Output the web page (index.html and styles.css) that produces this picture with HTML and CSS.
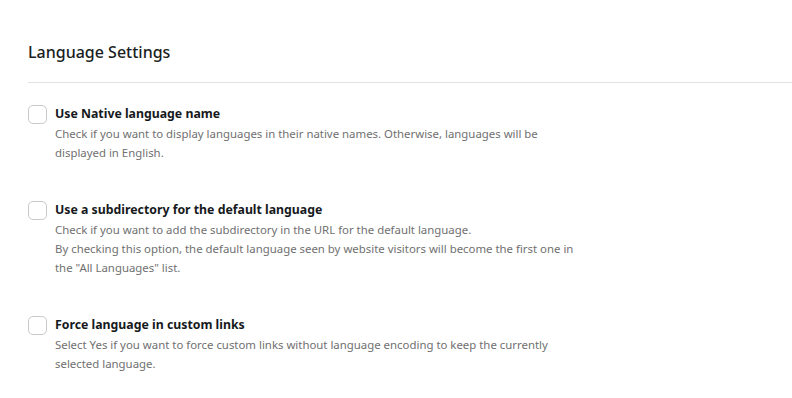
FILE: index.html
```html
<!DOCTYPE html>
<html lang="en">
<head>
    <meta charset="UTF-8">
    <meta name="viewport" content="width=device-width, initial-scale=1.0">
    <title>Language Settings</title>
    <link rel="stylesheet" href="styles.css">
</head>
<body>
    <div class="settings">
        <h2 class="settings-title">Language Settings</h2>
        <div class="settings-body">
            <div class="option">
                <input type="checkbox" class="option-check" id="native-name">
                <div class="option-text">
                    <label for="native-name" class="option-label">Use Native language name</label>
                    <p class="option-desc">Check if you want to display languages in their native names. Otherwise, languages will be displayed in English.</p>
                </div>
            </div>
            <div class="option">
                <input type="checkbox" class="option-check" id="subdirectory">
                <div class="option-text">
                    <label for="subdirectory" class="option-label">Use a subdirectory for the default language</label>
                    <p class="option-desc">Check if you want to add the subdirectory in the URL for the default language.<br>By checking this option, the default language seen by website visitors will become the first one in the "All Languages" list.</p>
                </div>
            </div>
            <div class="option">
                <input type="checkbox" class="option-check" id="force-lang">
                <div class="option-text">
                    <label for="force-lang" class="option-label">Force language in custom links</label>
                    <p class="option-desc">Select Yes if you want to force custom links without language encoding to keep the currently selected language.</p>
                </div>
            </div>
        </div>
    </div>
</body>
</html>
```

FILE: styles.css
```css
body {
    margin: 0;
    background: #fff;
    font-family: "Noto Sans", "Open Sans", sans-serif;
    color: #1d2327;
}
.settings {
    padding: 39px 0 0 28px;
}
.settings-title {
    margin: 0;
    font-size: 16px;
    font-weight: 500;
    line-height: 26px;
    padding-bottom: 17px;
    border-bottom: 1px solid #e2e2e2;
    color: #1a1e22;
}
.settings-body {
    display: flex;
    flex-direction: column;
    gap: 38px;
    padding-top: 21px;
}
.option {
    display: flex;
    align-items: flex-start;
    gap: 8px;
}
.option-check {
    appearance: none;
    -webkit-appearance: none;
    margin: 1px 0 0;
    width: 19px;
    height: 19px;
    border: 1px solid #c9c9c9;
    border-radius: 5px;
    background: #fff;
    flex-shrink: 0;
}
.option-text {
    display: flex;
    flex-direction: column;
}
.option-label {
    font-size: 12.3px;
    font-weight: 700;
    line-height: 20px;
    color: #16191c;
}
.option-desc {
    margin: 0;
    width: 525px;
    font-size: 11.4px;
    line-height: 19px;
    color: #707070;
}
```
